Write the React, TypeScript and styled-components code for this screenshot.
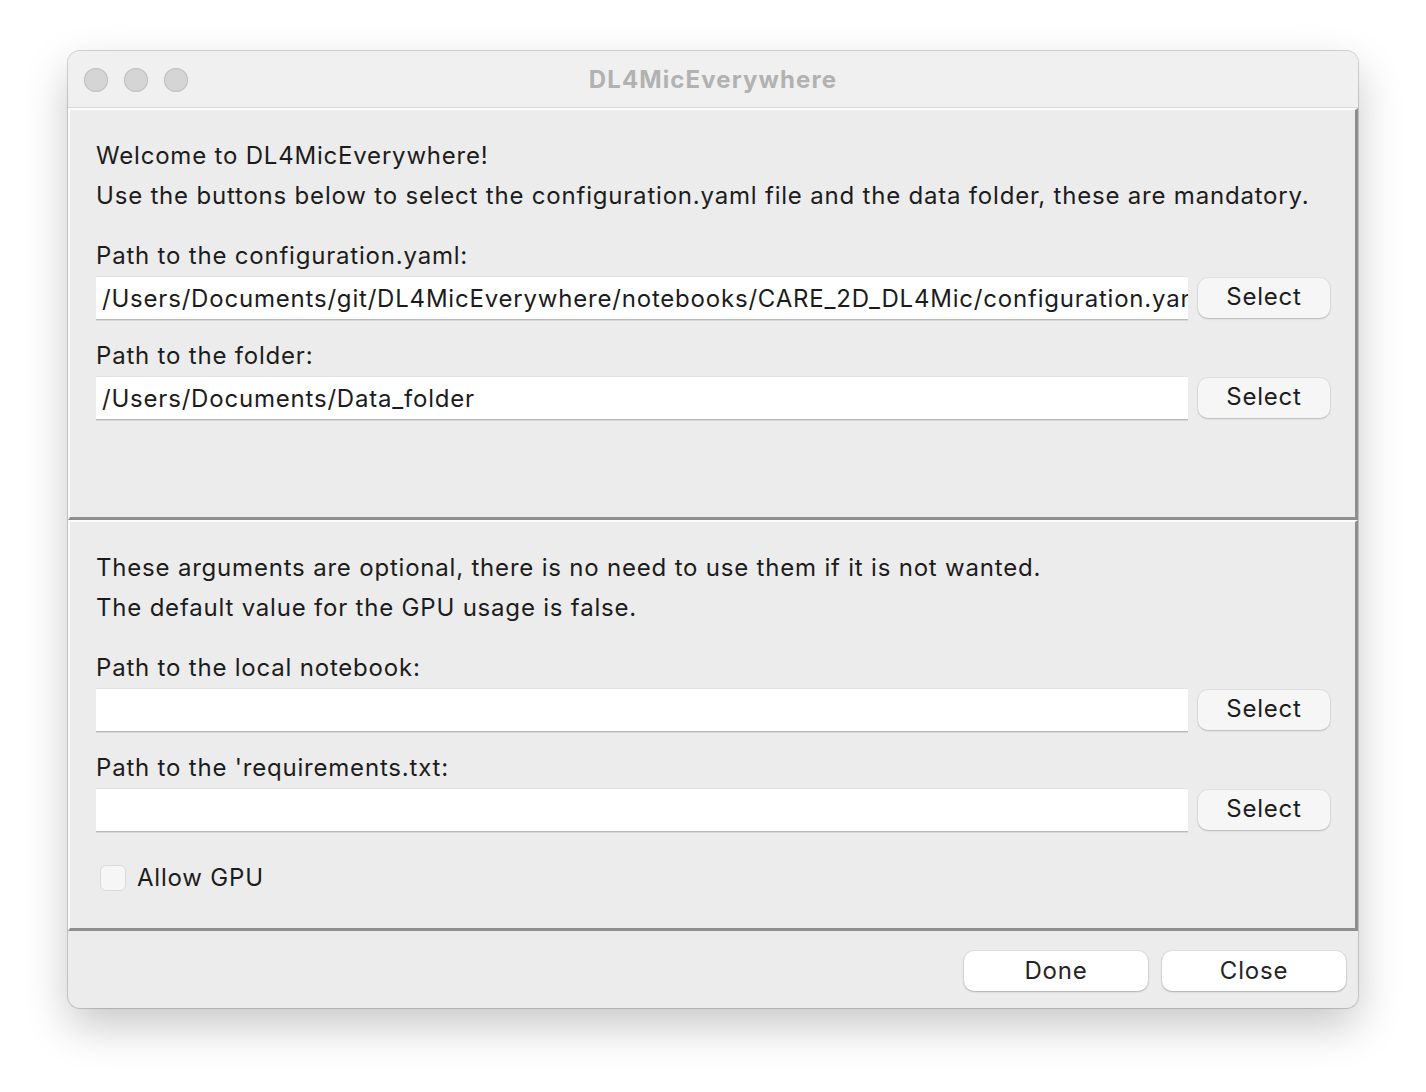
import styled, { createGlobalStyle } from "styled-components";

const GlobalStyle = createGlobalStyle`
    html, body {
        margin: 0;
        padding: 0;
        background: #ffffff;
    }
    body {
        font-family: Inter, "Noto Sans", "Liberation Sans", sans-serif;
        color: #1c1c1c;
        letter-spacing: 0.8px;
    }
`;

const Desktop = styled.div`
    width: 1426px;
    height: 1092px;
    padding: 51px 0 0 68px;
    box-sizing: border-box;
    background: #ffffff;
`;

const Window = styled.div`
    width: 1290px;
    height: 957px;
    border-radius: 12px;
    overflow: hidden;
    background: #ececec;
    box-shadow: 0 0 0 1px rgba(0, 0, 0, 0.16), 0 18px 44px rgba(0, 0, 0, 0.22);
    display: flex;
    flex-direction: column;
`;

const TitleBar = styled.div`
    height: 57px;
    flex-shrink: 0;
    background: #f0f0f0;
    border-bottom: 1px solid #d9d9d9;
    box-sizing: border-box;
    position: relative;
    display: flex;
    align-items: center;
    justify-content: center;
`;

const Lights = styled.div`
    position: absolute;
    left: 16px;
    top: 17px;
    display: flex;
    gap: 16px;
`;

const Light = styled.span`
    width: 24px;
    height: 24px;
    border-radius: 50%;
    background: #d5d5d5;
    box-shadow: inset 0 0 0 1px #c0c0c0;
`;

const Title = styled.div`
    font-size: 24px;
    font-weight: 700;
    color: #b2b2b2;
    letter-spacing: 1.1px;
    margin-top: 1px;
`;

const Panel = styled.section<{ $height: number }>`
    height: ${(p) => p.$height}px;
    flex-shrink: 0;
    box-sizing: border-box;
    border-style: solid;
    border-width: 2px 3px 3px 2px;
    border-color: #fbfbfb #8e8e8e #8e8e8e #fbfbfb;
    padding: 26px 25px 0 26px;
    display: flex;
    flex-direction: column;
`;

const Intro = styled.div`
    font-size: 24px;
    line-height: 40px;
    margin-bottom: 26px;
`;

const Label = styled.div`
    font-size: 24px;
    line-height: 28px;
    margin-bottom: 6px;
`;

const Row = styled.div`
    display: flex;
    align-items: center;
    gap: 10px;
    height: 44px;
    margin-bottom: 22px;
`;

const PathInput = styled.input`
    flex: 1;
    min-width: 0;
    height: 44px;
    box-sizing: border-box;
    margin: 0;
    background: #ffffff;
    border: none;
    border-top: 1px solid #e2e2e2;
    border-bottom: 1px solid #b9b9b9;
    box-shadow: 0 1px 0 #d8d8d8;
    border-radius: 0;
    outline: none;
    padding: 0 0 0 6px;
    font-family: inherit;
    font-size: 24px;
    letter-spacing: 0.8px;
    color: #1c1c1c;
`;

const SelectButton = styled.button`
    width: 132px;
    height: 40px;
    flex-shrink: 0;
    border: none;
    border-radius: 10px;
    background: #f6f6f6;
    box-shadow: 0 0 0 1px rgba(0, 0, 0, 0.04), 0 1px 2px rgba(0, 0, 0, 0.18);
    font-family: inherit;
    font-size: 24px;
    letter-spacing: 0.8px;
    color: #1c1c1c;
    padding: 0 0 3px;
`;

const CheckRow = styled.label`
    display: flex;
    align-items: center;
    gap: 11px;
    margin-top: 10px;
    padding-left: 4px;
    font-size: 24px;
    line-height: 28px;
`;

const CheckBox = styled.span`
    width: 26px;
    height: 26px;
    box-sizing: border-box;
    border-radius: 6px;
    background: #f6f6f6;
    border: 1px solid #dadada;
`;

const Footer = styled.div`
    flex: 1;
    display: flex;
    justify-content: flex-end;
    align-items: flex-start;
    gap: 14px;
    padding: 20px 12px 0 0;
`;

const DialogButton = styled.button`
    width: 184px;
    height: 40px;
    border: none;
    border-radius: 10px;
    background: #ffffff;
    box-shadow: 0 0 0 1px rgba(0, 0, 0, 0.05), 0 1px 2px rgba(0, 0, 0, 0.22);
    font-family: inherit;
    font-size: 24px;
    letter-spacing: 0.8px;
    color: #242424;
    padding: 0 0 2px;
`;

function PathField({ label, value = "" }: { label: string; value?: string }) {
    return (
        <>
            <Label>{label}</Label>
            <Row>
                <PathInput readOnly value={value} />
                <SelectButton>Select</SelectButton>
            </Row>
        </>
    );
}

function App() {
    return (
        <Desktop>
            <GlobalStyle />
            <Window>
                <TitleBar>
                    <Lights>
                        <Light />
                        <Light />
                        <Light />
                    </Lights>
                    <Title>DL4MicEverywhere</Title>
                </TitleBar>

                <Panel $height={412}>
                    <Intro>
                        Welcome to DL4MicEverywhere!
                        <br />
                        Use the buttons below to select the configuration.yaml file and the data folder, these are mandatory.
                    </Intro>
                    <PathField
                        label="Path to the configuration.yaml:"
                        value="/Users/Documents/git/DL4MicEverywhere/notebooks/CARE_2D_DL4Mic/configuration.yaml"
                    />
                    <PathField label="Path to the folder:" value="/Users/Documents/Data_folder" />
                </Panel>

                <Panel $height={411}>
                    <Intro>
                        These arguments are optional, there is no need to use them if it is not wanted.
                        <br />
                        The default value for the GPU usage is false.
                    </Intro>
                    <PathField label="Path to the local notebook:" />
                    <PathField label="Path to the 'requirements.txt:" />
                    <CheckRow>
                        <CheckBox />
                        Allow GPU
                    </CheckRow>
                </Panel>

                <Footer>
                    <DialogButton>Done</DialogButton>
                    <DialogButton>Close</DialogButton>
                </Footer>
            </Window>
        </Desktop>
    );
}

export default App;
